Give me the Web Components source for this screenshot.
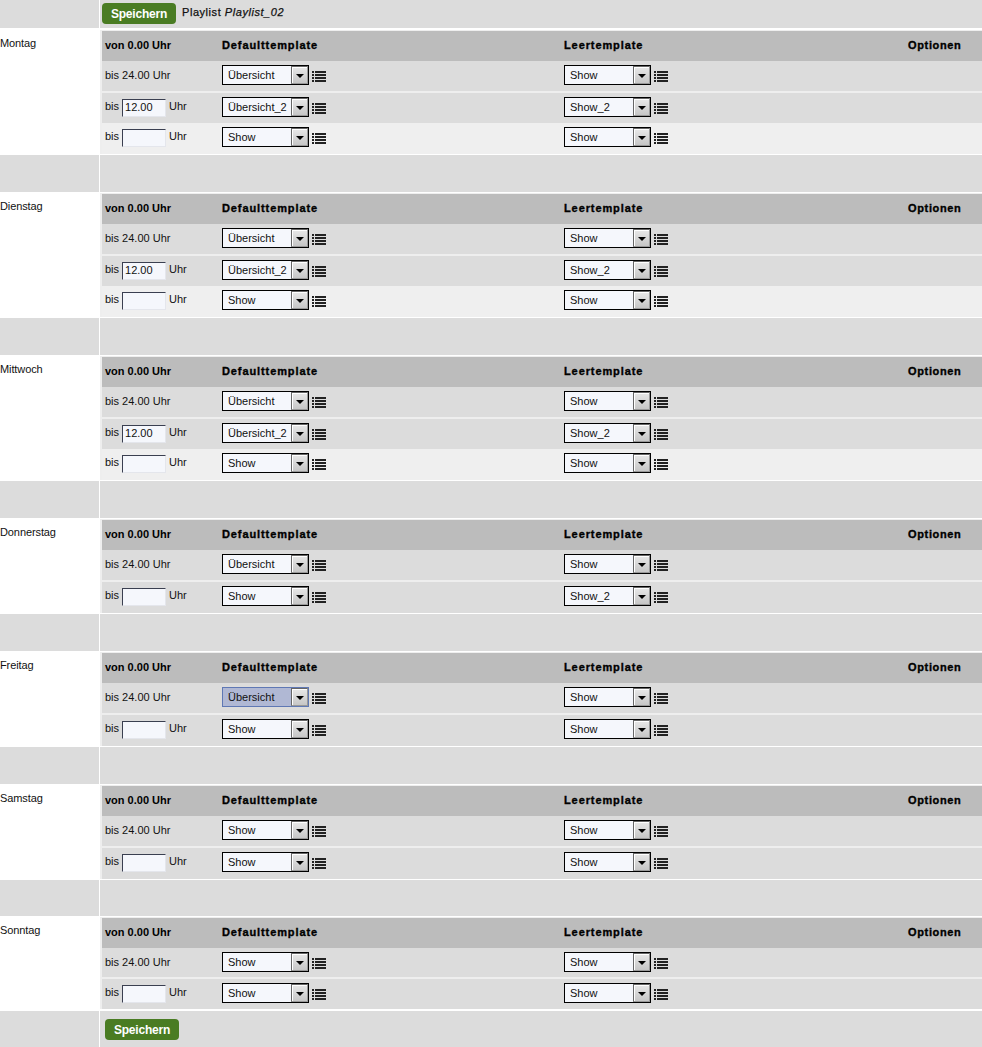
<!DOCTYPE html>
<html>
<head>
<meta charset="utf-8">
<style>
html, body { margin: 0; padding: 0; background: #fff; }
body { font: 11px "Liberation Sans", Arial, sans-serif; color: #111; }
plan-bar[slot="top"] { margin-bottom: 1px; }
</style>
</head>
<body>
<plan-page>
  <plan-bar slot="top" height="28" top="3">
    <save-button></save-button>
    <span style="margin:3px 0 0 6px;letter-spacing:.55px;-webkit-text-stroke:.25px #111">Playlist <i>Playlist_02</i></span>
  </plan-bar>
  <day-block name="Montag">
    <day-row till="24.00" a="Übersicht" b="Show"></day-row>
    <day-row till="12.00" a="Übersicht_2" b="Show_2" input></day-row>
    <day-row till="" a="Show" b="Show" input light last></day-row>
  </day-block>
  <day-block name="Dienstag">
    <day-row till="24.00" a="Übersicht" b="Show"></day-row>
    <day-row till="12.00" a="Übersicht_2" b="Show_2" input></day-row>
    <day-row till="" a="Show" b="Show" input light last></day-row>
  </day-block>
  <day-block name="Mittwoch">
    <day-row till="24.00" a="Übersicht" b="Show"></day-row>
    <day-row till="12.00" a="Übersicht_2" b="Show_2" input></day-row>
    <day-row till="" a="Show" b="Show" input light last></day-row>
  </day-block>
  <day-block name="Donnerstag">
    <day-row till="24.00" a="Übersicht" b="Show"></day-row>
    <day-row till="" a="Show" b="Show_2" input last></day-row>
  </day-block>
  <day-block name="Freitag">
    <day-row till="24.00" a="Übersicht" b="Show" focus></day-row>
    <day-row till="" a="Show" b="Show" input last></day-row>
  </day-block>
  <day-block name="Samstag" spacer="36">
    <day-row till="24.00" a="Show" b="Show"></day-row>
    <day-row till="" a="Show" b="Show" input last></day-row>
  </day-block>
  <day-block name="Sonntag" closing>
    <day-row till="24.00" a="Show" b="Show" height="29"></day-row>
    <day-row till="" a="Show" b="Show" input height="30" flush></day-row>
  </day-block>
  <plan-bar slot="bottom" height="36" inset="5" top="8">
    <save-button></save-button>
  </plan-bar>
</plan-page>

<script>
// page shell, the rows of the plan stacked on top of each other
class PlanPage extends HTMLElement {
  constructor() {
    super();
    this.attachShadow({ mode: "open" });
    this.shadowRoot.innerHTML = `
<style>
:host { display: block; width: 982px; }
</style>
<slot name="top"></slot>
<slot></slot>
<slot name="bottom"></slot>`;
  }
}

// grey band with the left column and the right part, used for the save rows
class PlanBar extends HTMLElement {
  constructor() {
    super();
    this.attachShadow({ mode: "open" });
    const height = this.getAttribute("height") || 37;
    const inset = this.getAttribute("inset") || 2;
    const top = this.getAttribute("top") || 0;
    this.shadowRoot.innerHTML = `
<style>
:host { display: grid; grid-template-columns: 99px 1fr; column-gap: 1px; height: ${height}px; }
.cell { background: #dcdcdc; }
.main { display: flex; align-items: flex-start; padding: ${top}px 0 0 ${inset}px; box-sizing: border-box; }
</style>
<div class="cell"></div>
<div class="cell main"><slot></slot></div>`;
  }
}

class SaveButton extends HTMLElement {
  constructor() {
    super();
    this.attachShadow({ mode: "open" });
    this.shadowRoot.innerHTML = `
<style>
:host {
  display: inline-flex; align-items: center; justify-content: center;
  width: 74px; height: 21px; padding-top: 1px; box-sizing: border-box; flex: none;
  background: #4a7c23; border-radius: 4px;
  color: #fff; font: bold 12px "Liberation Sans", Arial, sans-serif; letter-spacing: -.2px;
}
</style>
Speichern`;
  }
}

// one weekday: name on the left, table of time ranges on the right
class DayBlock extends HTMLElement {
  constructor() {
    super();
    this.attachShadow({ mode: "open" });
    const name = this.getAttribute("name");
    const height = this.getAttribute("spacer") || 37;
    const spacer = this.hasAttribute("closing") ? "" : `<div class="spacer"></div><div class="spacer"></div>`;
    this.shadowRoot.innerHTML = `
<style>
:host {
  display: grid; grid-template-columns: 99px 1fr; column-gap: 1px; row-gap: 1px;
  padding: 2px 0 ${this.hasAttribute("closing") ? 2 : 0}px; background: #fff;
}
.day { padding: 6px 0 0; letter-spacing: -.1px; }
.table { background: #eee; padding: 1px 0 0 2px; margin-top: -1px; }
.head {
  display: grid; grid-template-columns: 120px 342px 344px 1fr; height: 30px; align-items: center;
  padding-bottom: 2px; box-sizing: border-box;
  background: #bcbcbc; color: #000; font-weight: bold; letter-spacing: .9px; -webkit-text-stroke: .35px #000;
}
.head span:first-child { padding-left: 3px; letter-spacing: 0; -webkit-text-stroke: 0; }
.head span:last-child { letter-spacing: .65px; }
.spacer { background: #dcdcdc; height: ${height}px; }
</style>
<div class="day">${name}</div>
<div class="table">
  <div class="head"><span>von 0.00 Uhr</span><span>Defaulttemplate</span><span>Leertemplate</span><span>Optionen</span></div>
  <slot></slot>
</div>
${spacer}`;
  }
}

class DayRow extends HTMLElement {
  constructor() {
    super();
    this.attachShadow({ mode: "open" });
    const till = this.getAttribute("till");
    const withInput = this.hasAttribute("input");
    const focus = this.hasAttribute("focus") ? "focus" : "";
    const first = withInput
      ? `<span>bis</span><time-box>${till}</time-box><span>Uhr</span>`
      : `<span>bis ${till} Uhr</span>`;
    const last = this.hasAttribute("last");
    const flush = last || this.hasAttribute("flush");
    const gap = flush || this.nextElementSibling?.hasAttribute("light") ? 0 : 2;
    const height = this.getAttribute("height") || (last ? 31 : 30);
    this.shadowRoot.innerHTML = `
<style>
:host {
  display: grid; grid-template-columns: 120px 342px 344px 1fr; align-items: start;
  height: ${height}px; background: ${this.hasAttribute("light") ? "#efefef" : "#dcdcdc"};
  margin-bottom: ${gap}px;
}
.till { display: flex; align-items: flex-start; gap: 3px; padding: ${withInput ? 6 : 7}px 0 0 3px; line-height: 14px; }
.pick { display: flex; align-items: flex-start; gap: 3px; padding-top: 4px; }
</style>
<div class="till">${first}</div>
<div class="pick"><tpl-select ${focus}>${this.getAttribute("a")}</tpl-select><list-icon></list-icon></div>
<div class="pick"><tpl-select>${this.getAttribute("b")}</tpl-select><list-icon></list-icon></div>`;
  }
}

class TimeBox extends HTMLElement {
  constructor() {
    super();
    this.attachShadow({ mode: "open" });
    this.shadowRoot.innerHTML = `
<style>
:host {
  display: block; box-sizing: border-box; width: 44px; height: 18px; line-height: 15px;
  padding-left: 2px; color: #111; background: #f5f7fc;
  border: 1px solid; border-color: #3a3f50 #e4e6ec #e4e6ec #3a3f50;
}
</style><slot></slot>`;
  }
}

class TplSelect extends HTMLElement {
  constructor() {
    super();
    this.attachShadow({ mode: "open" });
    this.shadowRoot.innerHTML = `
<style>
:host {
  display: flex; box-sizing: border-box; width: 87px; height: 20px;
  border: 1px solid #000; background: #f5f7fc; color: #111;
}
:host([focus]) { background: #b0b8d4; border-color: #5f78b4; }
.text { flex: 1; padding-left: 5px; line-height: 18px; white-space: nowrap; }
.btn {
  width: 17px; box-sizing: border-box; display: flex; align-items: center; justify-content: center; flex: none;
  background: linear-gradient(#e8e8e8, #c6c6c6); border: 1px solid #666; border-right-color: #999; border-bottom-color: #999;
  box-shadow: inset 1px 1px #fff;
}
.btn i { width: 0; height: 0; border: 4px solid transparent; border-top: 4px solid #000; border-bottom: 0; margin-top: 1px; }
</style>
<div class="text"><slot></slot></div>
<div class="btn"><i></i></div>`;
  }
}

class ListIcon extends HTMLElement {
  constructor() {
    super();
    this.attachShadow({ mode: "open" });
    this.shadowRoot.innerHTML = `
<style>
:host { display: block; width: 14px; height: 11px; margin-top: 6px; }
svg { display: block; }
</style>
<svg width="14" height="11" viewBox="0 0 14 11" fill="#222">
  <path d="M0 0h2v2H0zM3 0h11v2H3zM0 3h2v2H0zM3 3h11v2H3zM0 6h2v2H0zM3 6h11v2H3zM0 9h2v2H0zM3 9h11v2H3z"/>
</svg>`;
  }
}

customElements.define("time-box", TimeBox);
customElements.define("tpl-select", TplSelect);
customElements.define("list-icon", ListIcon);
customElements.define("save-button", SaveButton);
customElements.define("day-row", DayRow);
customElements.define("day-block", DayBlock);
customElements.define("plan-bar", PlanBar);
customElements.define("plan-page", PlanPage);
</script>
</body>
</html>
